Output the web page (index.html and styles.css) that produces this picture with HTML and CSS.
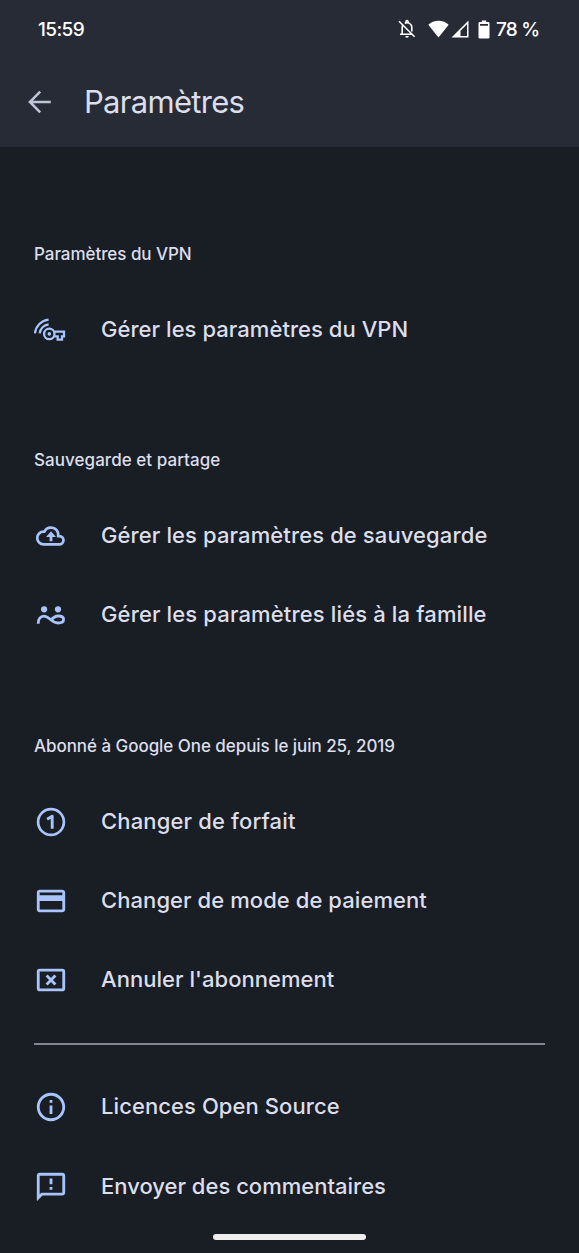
FILE: index.html
```html
<!DOCTYPE html>
<html lang="fr">
<head>
<meta charset="utf-8">
<title>Paramètres</title>
<link rel="stylesheet" href="styles.css">
</head>
<body>
<div class="screen">
  <header class="header">
    <div class="status">
      <span class="clock">15:59</span>
      <div class="status-icons">
        <svg class="bell" viewBox="0 0 18 20" fill="none" stroke="currentColor" stroke-width="1.6"><path d="M4.200 15.200V8.500a5 5 0 0 1 1-3M6.800 4.200a4.800 4.800 0 0 1 7 4.300v4M2 15.200h11.800M1 2.200l15.600 15.600"/><path d="M8 3.500v-1a1 1 0 0 1 2 0v1"/><path d="M7.200 17h3.600a1.800 1.800 0 0 1-3.600 0z" fill="currentColor" stroke="none"/></svg>
        <svg class="wifi" viewBox="0 0 21 18" fill="currentColor"><path d="M10.500 17.500 0.300 4.800C3.100 2.100 6.600.7 10.500.7s7.400 1.400 10.200 4.100z"/></svg>
        <svg class="signal" viewBox="0 0 18 18" fill="currentColor"><path fill-rule="evenodd" d="M17.500.5v17H.5zM16 4.200 9.500 10.700V16H16z"/></svg>
        <svg class="battery" viewBox="0 0 12 19" fill="currentColor"><path fill-rule="evenodd" d="M3.800.5h4.400v1.500h2a1.300 1.300 0 0 1 1.300 1.300v13.900a1.300 1.300 0 0 1-1.300 1.300H1.800A1.300 1.300 0 0 1 .5 17.200V3.300a1.300 1.300 0 0 1 1.300-1.300h2zM2 4v1.800h8V4z"/></svg>
        <span class="level">78 %</span>
      </div>
    </div>
    <div class="appbar">
      <svg class="back" viewBox="0 0 24 24" fill="none" stroke="currentColor" stroke-width="2.500"><path d="M22.800 12H2.500M12.200 1.700 1.900 12l10.300 10.300"/></svg>
      <h1 class="title">Paramètres</h1>
    </div>
  </header>

  <main class="content">
    <section class="section">
      <h2 class="heading h-vpn">Paramètres du VPN</h2>
      <div class="row"><svg class="icon" viewBox="0 0 34 34" fill="none" stroke="currentColor" stroke-width="2.300"><path d="M.9 20.300A15.500 15.500 0 0 1 14.600 6.600M5.700 20.300A10.500 10.500 0 0 1 14.600 11.300"/><circle cx="15.300" cy="20.900" r="5.200"/><circle cx="15.300" cy="20.900" r="1.800" fill="currentColor" stroke="none"/><path d="M20 18.700h10v4.600h-2v3.300h-4.300v-3.300H20"/></svg><span class="label l-vpn">Gérer les paramètres du VPN</span></div>
    </section>

    <section class="section">
      <h2 class="heading h-share">Sauvegarde et partage</h2>
      <div class="row"><svg class="icon" viewBox="0 0 34 34" fill="none" stroke="currentColor" stroke-width="2.700"><path d="M9.600 25.300h15.700a4.100 4.100 0 0 0 .2-8.200h-1.300v-1.500a7.300 7.300 0 0 0-13.800-3h-.8A6.350 6.350 0 0 0 9.600 25.300z"/><path d="M17 22.300v-6" stroke-width="2.800"/><path d="m17 12.300-5 5.800h10z" fill="currentColor" stroke="none"/></svg><span class="label l-backup">Gérer les paramètres de sauvegarde</span></div>
      <div class="row"><svg class="icon" viewBox="0 0 34 34" fill="none" stroke="currentColor" stroke-width="2.800"><circle cx="10.100" cy="11.300" r="3.100" fill="currentColor" stroke="none"/><circle cx="24" cy="11.300" r="3.100" fill="currentColor" stroke="none"/><path d="M4.200 25.700c0-4.700 2.300-7.600 5.700-7.600 5.600 0 7.200 6.900 14 6.900 3.600 0 5.700-1.300 5.700-3.500s-2.200-3.500-5.300-3.500c-3.600 0-5.700 2.100-7.500 4.400"/></svg><span class="label l-family">Gérer les paramètres liés à la famille</span></div>
    </section>

    <section class="section">
      <h2 class="heading h-plan">Abonné à Google One depuis le juin 25, 2019</h2>
      <div class="row"><svg class="icon" viewBox="0 0 34 34" fill="none" stroke="currentColor" stroke-width="2.700"><circle cx="17" cy="17" r="12.900"/><path d="m13.100 14.300 5.100-3v12.400" stroke-width="2.900" stroke-linejoin="round"/></svg><span class="label l-plan">Changer de forfait</span></div>
      <div class="row"><svg class="icon" viewBox="0 0 24 24" fill="currentColor"><path d="M20 4H4c-1.110 0-1.990.89-1.990 2L2 18c0 1.110.89 2 2 2h16c1.110 0 2-.89 2-2V6c0-1.110-.89-2-2-2zm0 14H4v-6h16v6zm0-10H4V6h16v2z"/></svg><span class="label l-pay">Changer de mode de paiement</span></div>
      <div class="row"><svg class="icon" viewBox="0 0 24 24" fill="none" stroke="currentColor" stroke-width="2"><rect x="3" y="5" width="18" height="14" rx="1"/><path d="m8.900 8.900 6.200 6.200m0-6.200-6.200 6.200"/></svg><span class="label l-cancel">Annuler l'abonnement</span></div>
    </section>

    <section class="about">
      <div class="row"><svg class="icon" viewBox="0 0 24 24" fill="currentColor"><path d="M11 7h2v2h-2zm0 4h2v6h-2zm1-9C6.480 2 2 6.480 2 12s4.480 10 10 10 10-4.480 10-10S17.520 2 12 2zm0 18c-4.410 0-8-3.590-8-8s3.590-8 8-8 8 3.590 8 8-3.590 8-8 8z"/></svg><span class="label l-license">Licences Open Source</span></div>
      <div class="row"><svg class="icon" viewBox="0 0 24 24" fill="currentColor"><path d="M20 2H4c-1.100 0-1.990.9-1.990 2L2 22l4-4h14c1.100 0 2-.9 2-2V4c0-1.100-.9-2-2-2zm0 14H5.170L4 17.170V4h16v12zM11 12h2v2h-2zm0-6h2v4h-2z"/></svg><span class="label l-feedback">Envoyer des commentaires</span></div>
    </section>
  </main>
  <div class="gesture"></div>
</div>
</body>
</html>
```
FILE: styles.css
```css
* { box-sizing: border-box; }
body { margin: 0; background: #191d24; }
h1, h2 { margin: 0; font-weight: 400; }
svg { display: block; flex: none; }

.screen {
  display: flex;
  flex-direction: column;
  width: 579px;
  height: 1253px;
  overflow: hidden;
  background: #191d24;
  color: #dcdeeb;
  font-family: Inter, "Open Sans", sans-serif;
  white-space: nowrap;
}

.header { height: 147px; background: #262b36; flex: none; }
.status {
  display: flex;
  justify-content: space-between;
  align-items: center;
  height: 58px;
  padding: 0 40px 0 38px;
  color: #fff;
  font-size: 19px;
  font-weight: 500;
}
.clock { letter-spacing: -0.6px; }
.status-icons { display: flex; align-items: center; }
.bell { width: 18px; height: 20px; margin-right: 12px; }
.wifi { width: 21px; height: 18px; margin-right: 2px; }
.signal { width: 18px; height: 18px; margin-right: 9px; }
.battery { width: 12px; height: 19px; margin-right: 6px; }
.level { width: 43px; letter-spacing: -0.8px; }

.appbar { display: flex; align-items: center; height: 88px; padding-left: 28px; }
.back { width: 24px; height: 24px; color: #bfc5d6; }
.title { margin-left: 32px; font-size: 31px; line-height: 40px; letter-spacing: -0.7px; }

.content { padding: 95px 34px 0; }
.section { margin-bottom: 79px; }
.heading { height: 48px; font-size: 17px; line-height: 24px; font-weight: 450; }
.h-vpn { letter-spacing: -0.05px; }
.h-share { letter-spacing: 0.05px; }
.h-plan { letter-spacing: -0.05px; }

.row { display: flex; align-items: center; height: 79.300px; }
.icon { width: 34px; height: 34px; margin-left: -0.500px; color: #a9c4fb; }
.label {
  margin-left: 33.500px;
  padding-bottom: 2px;
  font-size: 22px;
  line-height: 30px;
  font-weight: 450;
}
.l-vpn { letter-spacing: 0.050px; }
.l-backup { letter-spacing: 0.110px; }
.l-family { letter-spacing: 0.140px; }
.l-plan { letter-spacing: 0.150px; }
.l-pay { letter-spacing: 0.070px; }
.l-cancel { letter-spacing: 0.040px; }
.l-license { letter-spacing: 0.080px; }
.l-feedback { letter-spacing: 0.010px; }

.about { margin-top: -56px; padding-top: 23px; border-top: 2px solid #83868f; }

.gesture {
  width: 153px;
  height: 6px;
  margin: auto auto 13px;
  border-radius: 3px;
  background: #efeeef;
}
```
